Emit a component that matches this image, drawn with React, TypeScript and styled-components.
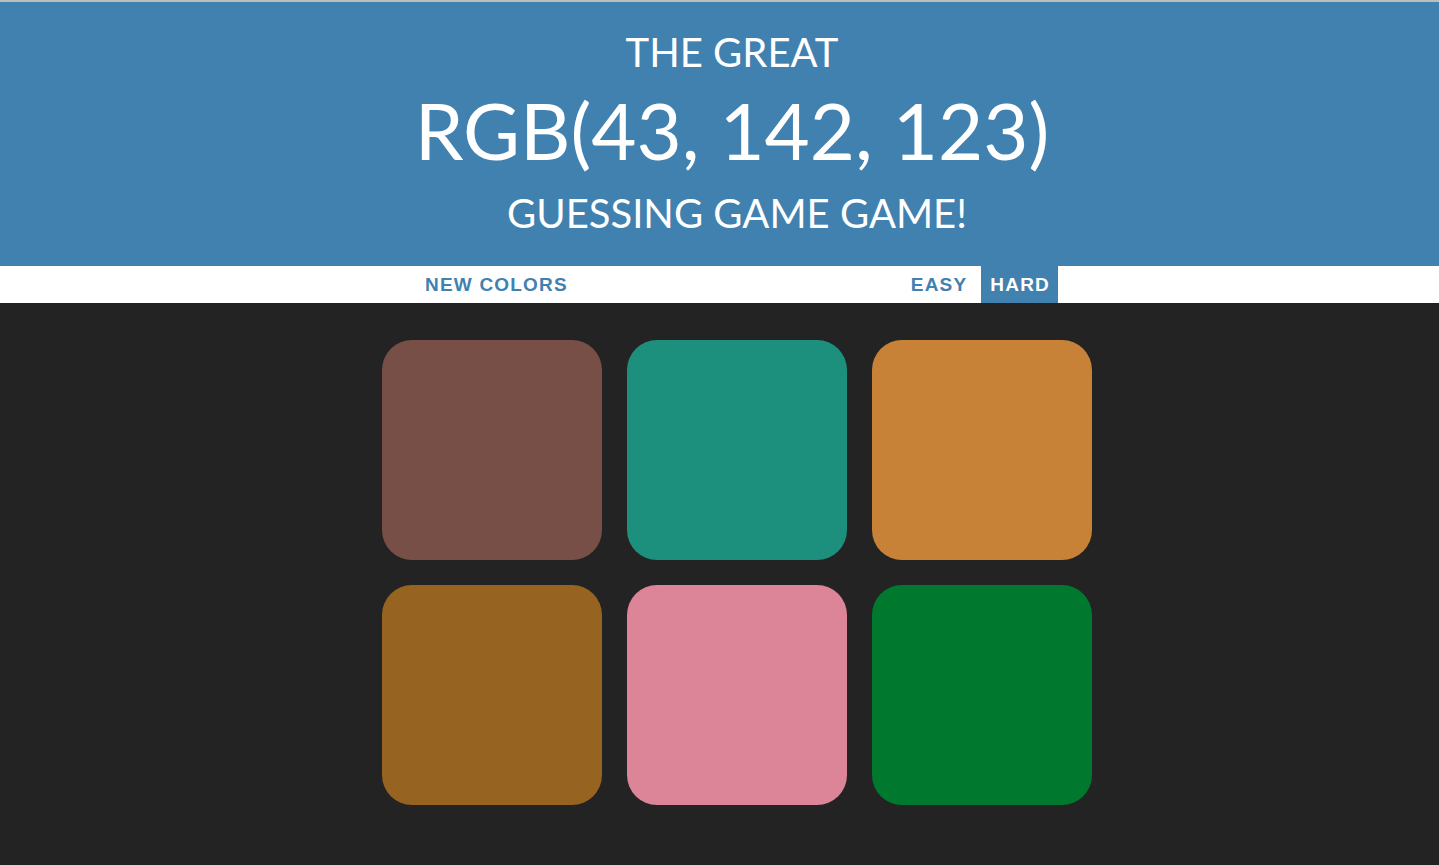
import React from 'react';
import styled, { createGlobalStyle } from 'styled-components';

const GlobalStyle = createGlobalStyle`
    html, body {
        margin: 0;
        padding: 0;
        background: #232323;
    }
    body {
        font-family: 'Lato', 'Liberation Sans', sans-serif;
    }
`;

const BLUE = '#4181b0';

const Page = styled.div`
    min-height: 865px;
    border-top: 2px solid #bdbdbd;
    background: #232323;
`;

const Header = styled.h1`
    margin: 0;
    height: 264px;
    background: ${BLUE};
    color: #ffffff;
    font-weight: 400;
    text-transform: uppercase;
    text-align: center;
    display: flex;
    flex-direction: column;
    align-items: center;
    padding-left: 25px;
    box-sizing: border-box;
`;

const Line = styled.span<{ $size: number; $top: number; $shift?: number }>`
    display: block;
    font-size: ${(p) => p.$size}px;
    line-height: 1;
    margin-top: ${(p) => p.$top}px;
    margin-left: ${(p) => p.$shift ?? 0}px;
`;

const Stripe = styled.div`
    background: #ffffff;
    height: 37px;
`;

const StripeInner = styled.div`
    width: 642px;
    height: 100%;
    margin-left: calc(50% - 303.5px);
    display: flex;
    align-items: stretch;
    gap: 6px;
`;

const Spacer = styled.span`
    flex: 1;
`;

const Button = styled.button<{ $selected?: boolean }>`
    border: none;
    margin: 0;
    padding: 1px 8px 0 9px;
    height: 100%;
    background: ${(p) => (p.$selected ? BLUE : 'transparent')};
    color: ${(p) => (p.$selected ? '#ffffff' : BLUE)};
    font-family: 'Liberation Sans', Arial, sans-serif;
    font-weight: 700;
    font-size: 19px;
    letter-spacing: 1.2px;
    text-transform: uppercase;
    cursor: pointer;
`;

const Grid = styled.div`
    width: 710px;
    margin-left: calc(50% - 337.5px);
    padding-top: 37px;
    display: grid;
    grid-template-columns: repeat(3, 220px);
    gap: 25px;
`;

const Square = styled.div<{ $color: string }>`
    width: 220px;
    height: 220px;
    border-radius: 30px;
    background: ${(p) => p.$color};
`;

const colors = ['#774f47', '#1c907c', '#c88238', '#966420', '#dc8599', '#00792f'];

export default function App() {
    return (
        <Page>
            <GlobalStyle />
            <Header>
                <Line $size={40} $top={30}>The Great</Line>
                <Line $size={78} $top={19}>RGB(43, 142, 123)</Line>
                <Line $size={40} $top={24} $shift={10}>Guessing Game Game!</Line>
            </Header>
            <Stripe>
                <StripeInner>
                    <Button>New Colors</Button>
                    <Spacer />
                    <Button>Easy</Button>
                    <Button $selected>Hard</Button>
                </StripeInner>
            </Stripe>
            <Grid>
                {colors.map((c) => (
                    <Square key={c} $color={c} />
                ))}
            </Grid>
        </Page>
    );
}
